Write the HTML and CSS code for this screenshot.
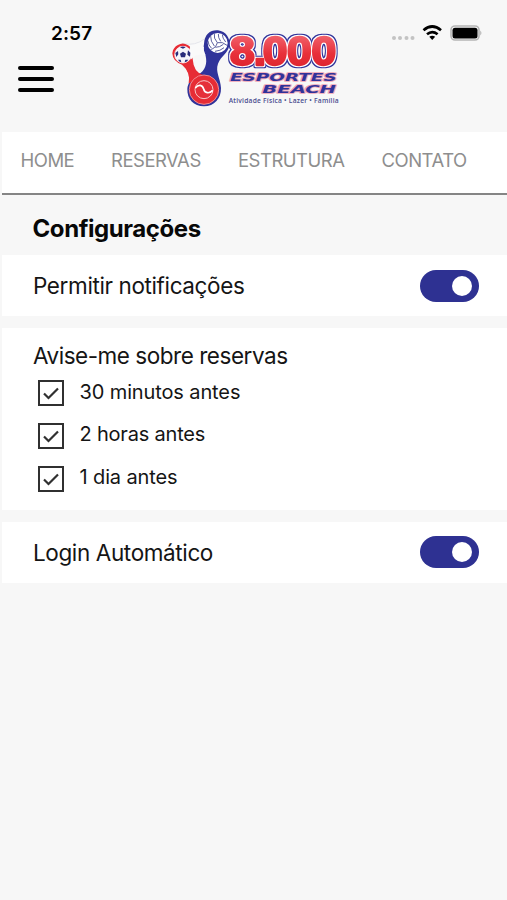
FILE: index.html
```html
<!DOCTYPE html>
<html lang="pt-BR">
<head>
<meta charset="utf-8">
<meta name="viewport" content="width=device-width, initial-scale=1">
<title>Configurações</title>
<link rel="stylesheet" href="styles.css">
</head>
<body>
<header class="header">
  <div class="left">
    <div class="time">2:57</div>
    <button class="menu" aria-label="Menu"><span></span><span></span><span></span></button>
  </div>
  <svg class="logo" viewBox="0 0 570 300">
    <defs>
      <linearGradient id="red" x1="0" y1="0" x2="0" y2="1">
        <stop offset=".15" stop-color="#f0606a"/><stop offset=".55" stop-color="#e8303a"/><stop offset="1" stop-color="#d91f2b"/>
      </linearGradient>
      <filter id="outline" x="-10%" y="-10%" width="120%" height="120%" color-interpolation-filters="sRGB">
        <feMorphology in="SourceAlpha" operator="dilate" radius="3.6" result="inner"/>
        <feMorphology in="SourceAlpha" operator="dilate" radius="6.6" result="outer"/>
        <feFlood flood-color="#fff"/><feComposite in2="inner" operator="in" result="white"/>
        <feFlood flood-color="#30339a"/><feComposite in2="outer" operator="in" result="blue"/>
        <feMerge><feMergeNode in="blue"/><feMergeNode in="white"/><feMergeNode in="SourceGraphic"/></feMerge>
      </filter>
    </defs>
    <path d="M68 70Q105 80 136 55L150 98Q112 92 91 117Z" fill="#fafafa" stroke="#d9dbe4" stroke-width="2"/>
    <path d="M39 91A31 31 0 0 1 89 79L98 117Q101 157 128 164L111 190L87 193Q93 157 66 134Q38 124 37 100Z" fill="#e72c35"/>
    <path d="M132 72C134 40 153 29 174 31C198 34 211 55 208 76C205 99 183 108 174 131C165 155 182 177 183 204C184 235 163 259 132 259C101 259 81 237 82 207C83 190 93 177 113 166C137 151 142 130 137 108C133 94 129 88 132 72Z" fill="#30339a"/>
    <path d="M94 118Q101 159 129 165L112 182L86 190Q92 155 68 132Z" fill="#e72c35"/>
    <path d="M89 84Q111 88 132 80Q129 92 137 106Q113 98 92 119Z" fill="#fafafa"/>
    <circle cx="132" cy="209" r="44" fill="#e72c35" stroke="#ef8b91" stroke-width="3"/>
    <circle cx="132" cy="209" r="27" fill="#e5303a" stroke="#f7c5c8" stroke-width="3"/>
    <path d="M106 204C116 192 127 194 131 207C134 220 148 222 158 211" fill="none" stroke="#fff" stroke-width="5"/>
    <circle cx="69" cy="104" r="25" fill="#f5f5fa" stroke="#fff" stroke-width="2"/>
    <path d="M69 95L78 101L75 112H63L60 101ZM60 82L69 86L77 82Q69 77 60 82ZM46 99L54 93L55 103L49 111ZM84 91L91 98L90 110L82 104ZM54 119L62 119L64 127Q57 125 54 119ZM76 119H85Q81 126 74 127Z" fill="#292c7b"/>
    <circle cx="173" cy="69" r="30" fill="#fff"/>
    <path d="M172 68Q160 55 163 40M172 68Q188 64 201 76M172 68Q168 84 151 89M152 48Q151 64 163 78M144 63Q145 76 154 84M175 42Q174 53 182 64M187 44Q187 54 197 66M166 82Q180 82 190 73M165 94Q181 93 192 83" fill="none" stroke="#5c609f" stroke-width="3"/>
    <text class="number" transform="scale(1.1 1)" x="191 256 280 346.5 413.500" y="136" filter="url(#outline)">8.000</text>
    <g class="brand">
      <text x="210" y="183" textLength="320" lengthAdjust="spacingAndGlyphs">ESPORTES</text>
      <text x="307" y="220" textLength="221" lengthAdjust="spacingAndGlyphs">BEACH</text>
    </g>
    <text class="tagline" x="206" y="249" textLength="330">Atividade Física • Lazer • Família</text>
  </svg>
  <svg class="status" viewBox="0 0 92 20">
    <g fill="#c3c3c3"><circle cx="4" cy="13" r="2"/><circle cx="10" cy="13" r="2"/><circle cx="16.5" cy="13" r="2"/><circle cx="22.5" cy="13" r="2"/></g>
    <path d="M33.5 5.2Q42.200-2.200 51 5.200M37 9.300Q42.200 5 47.600 9.300" fill="none" stroke="#000" stroke-width="2.7"/>
    <path d="M39.300 11.700Q42.200 9.600 45.200 11.700L42.200 15Z"/>
    <rect x="61" y="1" width="28" height="14" rx="4" fill="#f7f7f7" stroke="#b5b5b5" stroke-width="1.600"/>
    <rect x="62.500" y="2.700" width="25" height="10.700" rx="2.500"/>
    <path d="M90.300 5.500Q92.500 8 90.300 10.500Z" fill="#aaa"/>
  </svg>
</header>
<nav class="nav">
  <a class="home">HOME</a><a class="reservas">RESERVAS</a><a class="estrutura">ESTRUTURA</a><a class="contato">CONTATO</a>
</nav>
<main class="content">
  <h1>Configurações</h1>
  <section class="row"><span class="notify">Permitir notificações</span><i class="switch"></i></section>
  <section class="card">
    <h2>Avise-me sobre reservas</h2>
    <label><svg viewBox="0 0 26 26"><path d="M1 1H25V25H1Z"/><path class="tick" d="M6 13.500L10.500 18L20 8.500"/></svg><span class="minutes">30 minutos antes</span></label>
    <label><svg viewBox="0 0 26 26"><path d="M1 1H25V25H1Z"/><path class="tick" d="M6 13.500L10.500 18L20 8.500"/></svg><span class="hours">2 horas antes</span></label>
    <label><svg viewBox="0 0 26 26"><path d="M1 1H25V25H1Z"/><path class="tick" d="M6 13.500L10.500 18L20 8.500"/></svg><span class="day">1 dia antes</span></label>
  </section>
  <section class="row"><span class="login">Login Automático</span><i class="switch"></i></section>
</main>
</body>
</html>
```
FILE: styles.css
```css
* { box-sizing: border-box; }
body { margin: 0; min-height: 900px; background: #f7f7f7; color: #151515; font-family: Inter, sans-serif; overflow: hidden; }
.header { height: 132px; display: flex; align-items: flex-start; }
.left { width: 160px; padding: 21px 0 0 18px; flex: none; }
.time { margin-left: 33px; height: 25px; line-height: 25px; font-size: 19px; font-weight: 600; letter-spacing: .1px; color: #000; }
.menu { display: flex; flex-direction: column; gap: 7.500px; width: 36px; margin-top: 20px; padding: 0; border: 0; background: none; }
.menu span { width: 36px; height: 3.500px; border-radius: 2px; background: #000; }
.logo { width: 190px; height: 100px; margin-top: 20px; flex: none; }
.number { font: 700 121px "Liberation Sans", sans-serif; fill: url(#red); stroke: url(#red); stroke-width: 7; stroke-linejoin: round; }
.brand { font: italic 700 34px "DejaVu Sans", sans-serif; fill: #30339a; stroke: #f1a5b5; stroke-width: 5; stroke-linejoin: round; paint-order: stroke; }
.tagline { font: 600 20px "Open Sans", sans-serif; fill: #4b4e90; }
.status { width: 92px; height: 20px; margin: 25px 0 0 40px; flex: none; }
.nav { height: 63px; margin-left: 2px; padding: 17px 0 0 18.500px; display: flex; background: #fff; border-bottom: 2px solid #858585; color: #8e8e8e; font-size: 18.500px; line-height: 22px; letter-spacing: -.5px; }
.nav a { white-space: nowrap; flex: none; }
.home { width: 90.500px; }
.reservas { width: 127px; }
.estrutura { width: 143.500px; }
.content { margin-left: 2px; }
h1 { margin: 0; height: 60px; padding: 17px 0 0 30.500px; font-size: 24px; line-height: 34px; font-weight: 700; letter-spacing: -.42px; color: #080808; }
.row { height: 61px; padding: 0 28px 0 31px; display: flex; align-items: center; justify-content: space-between; background: #fff; font-size: 22.500px; letter-spacing: -.38px; }
.switch { width: 59px; height: 32px; padding: 6px 7.500px 6px 0; border-radius: 16px; background: #2e3192; display: flex; justify-content: flex-end; }
.switch::after { content: ""; width: 20px; height: 20px; border-radius: 50%; background: #fff; }
.card { height: 182px; margin: 12px 0; padding: 12px 0 0 31px; background: #fff; }
.card + .row .switch { margin-bottom: 1px; }
h2 { margin: 0; height: 34px; font-size: 22.500px; line-height: 31px; font-weight: 400; letter-spacing: -.47px; }
.card label { display: flex; height: 43px; padding: 6px 0 0 5px; align-items: flex-start; font-size: 20px; line-height: 24px; letter-spacing: -.12px; }
.card label svg { width: 26px; height: 26px; margin: 0 15.500px 0 0; fill: none; stroke: #303030; stroke-width: 2; }
.card label .tick { stroke-width: 2.200; }
.card label .hours, .card label .day { margin-top: -1px; }
.hours { letter-spacing: -.2px; }
```
